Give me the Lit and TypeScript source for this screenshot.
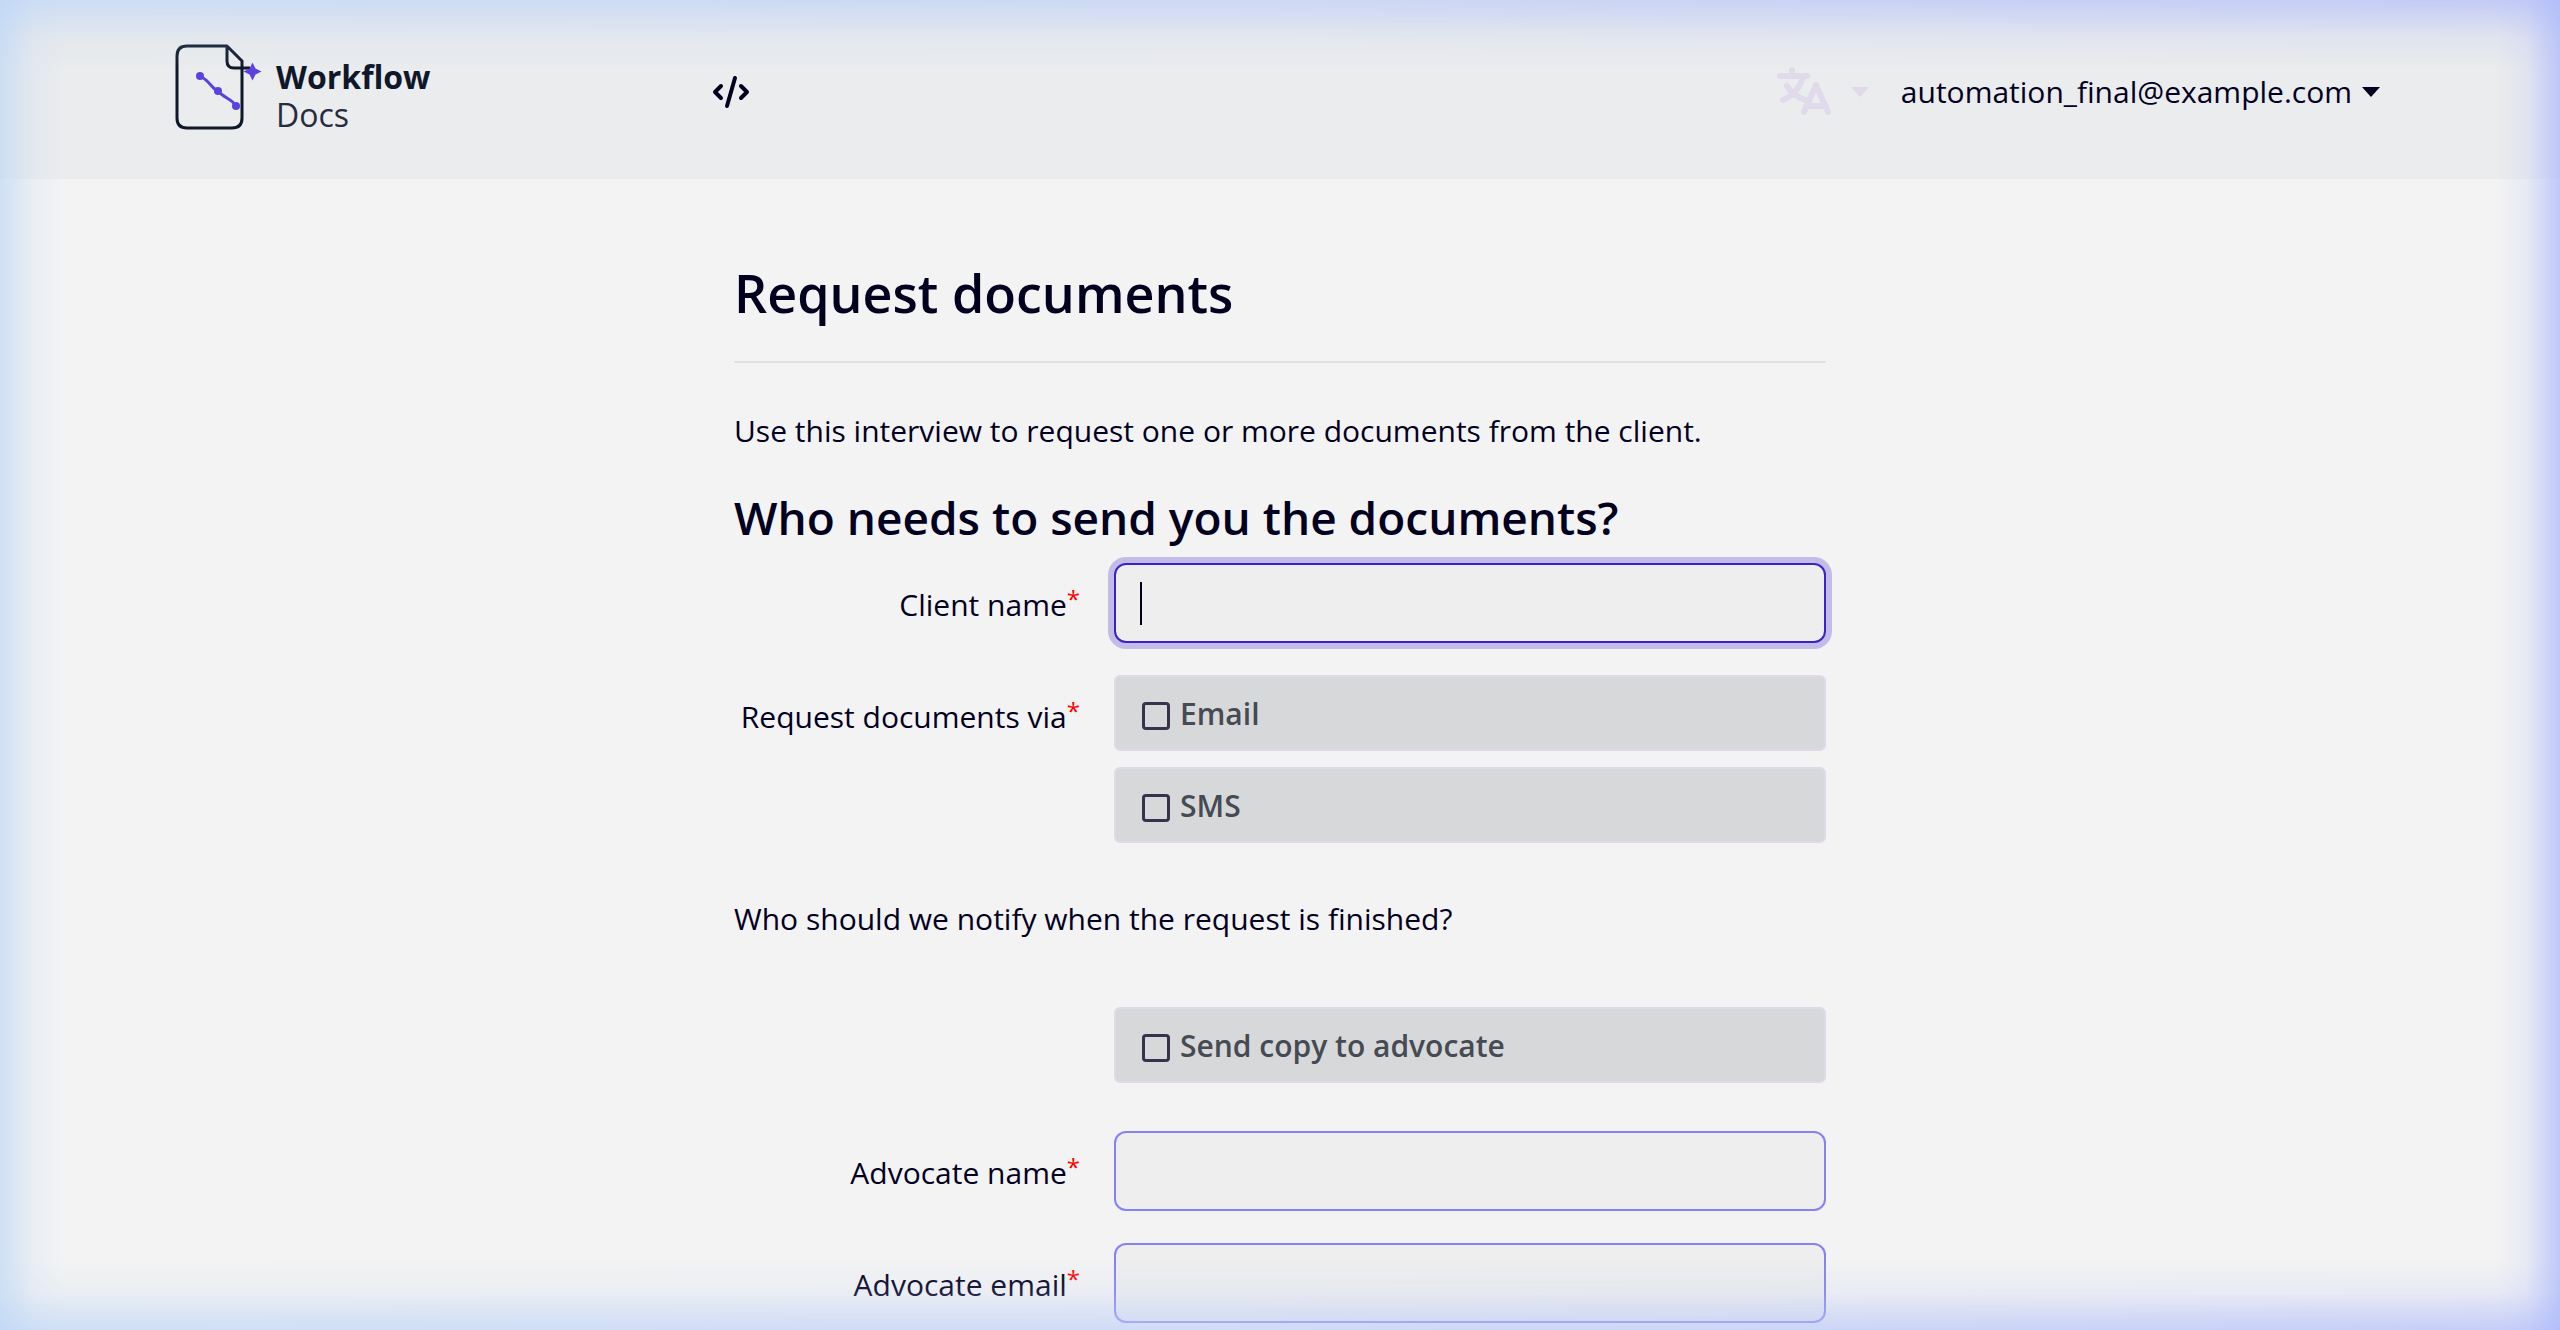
import { LitElement, html, css, svg } from "lit";
import { customElement, query } from "lit/decorators.js";

@customElement("app-root")
export class AppRoot extends LitElement {
  @query("#client-name") private clientName!: HTMLInputElement;

  static styles = css`
    :host {
      display: block;
      min-height: 100vh;
      box-sizing: border-box;
      background: #f3f3f3;
      color: #02001f;
      font: 400 30px/48px "Segoe UI", "Open Sans", "Noto Sans", sans-serif;
    }
    *, *::before, *::after { box-sizing: border-box; }
    .glow {
      position: fixed;
      inset: 0;
      z-index: 5;
      pointer-events: none;
      background: linear-gradient(to right, #bcd6f6, #bccdf8 50%, #adb9fb);
      mask-image:
        linear-gradient(to right, #000000a6, #0000006e 16px, #00000024 34px, #0000 64px),
        linear-gradient(to left, #000000bf, #00000078 16px, #00000026 34px, #0000 64px),
        linear-gradient(to bottom, #000000a6, #0000006e 18px, #00000026 38px, #0000 70px),
        linear-gradient(to top, #000000a6, #0000006e 18px, #00000026 38px, #0000 70px);
    }
    .bar {
      display: flex;
      align-items: center;
      height: 179px;
      padding: 4px 180px 0 174px;
      background: #ebeced;
    }
    .brand {
      display: flex;
      align-items: center;
      gap: 14px;
      color: #0f172a;
      text-decoration: none;
      font-size: 32px;
      line-height: 38px;
    }
    .brand-name { display: flex; flex-direction: column; padding-top: 8px; }
    .brand-name strong { font-weight: 700; }
    .brand-name span { color: #272c3e; }
    .mark { display: block; width: 88px; height: 96px; }
    .source { margin-left: 282px; display: flex; color: inherit; }
    .tools { margin-left: auto; display: flex; align-items: center; gap: 32px; }
    .tools button {
      display: flex;
      align-items: center;
      gap: 10px;
      padding: 0;
      border: 0;
      background: none;
      color: inherit;
      font: inherit;
    }
    .tools .language { gap: 20px; color: #e1daea; }
    main {
      max-width: 1092px;
      margin: 0 auto;
      padding: 80px 0 4px;
    }
    h1, h2, p { margin: 0; }
    h1 { font-size: 52px; line-height: 68px; font-weight: 600; }
    h2 { margin-bottom: 18px; font-size: 46px; line-height: 56px; font-weight: 600; }
    hr { margin: 34px 0 44px; border: 0; border-top: 2px solid #e1e1e1; }
    .intro { margin-bottom: 34px; }
    .question { margin: 52px 0 64px; }
    .row {
      display: grid;
      grid-template-columns: minmax(0, 346fr) minmax(0, 712fr);
      column-gap: 34px;
      margin-bottom: 32px;
    }
    .row.after { margin-bottom: 48px; }
    .row:last-child { margin-bottom: 0; }
    .label { padding-top: 18px; text-align: right; }
    .label sup { color: #f00; font-size: 24px; line-height: 0; vertical-align: 8px; }
    .field {
      display: block;
      width: 100%;
      height: 80px;
      padding: 0 24px;
      border: 2px solid #8583f3;
      border-radius: 12px;
      background: #eeeeee;
      color: inherit;
      font: inherit;
      outline: 0;
    }
    .field:focus {
      border-color: #3d20c9;
      box-shadow: 0 0 0 6px #c4bce8;
      caret-color: transparent;
    }
    .field:focus:placeholder-shown {
      background: linear-gradient(#02001f, #02001f) 24px center / 2px 43px no-repeat #eeeeee;
    }
    .choices { display: grid; row-gap: 16px; }
    .choice {
      display: flex;
      align-items: center;
      gap: 10px;
      height: 76px;
      padding: 2px 26px 0;
      border: 2px solid #dfd9e9;
      border-radius: 6px;
      background: #d7d8da;
      color: #454a53;
      font-weight: 600;
    }
    .choice input {
      appearance: none;
      width: 28px;
      height: 28px;
      margin: 4px 0 0;
      border: 3px solid #37334d;
      border-radius: 4px;
    }
    .choice input:checked { background: #37334d; }
  `;

  firstUpdated() {
    this.clientName.focus();
  }

  private caret() {
    return svg`<svg width="18" height="10" viewBox="0 0 18 10" fill="currentColor" aria-hidden="true"><path d="M0 0h18L9 10z"/></svg>`;
  }

  private choice(id: string, text: string) {
    return html`<label class="choice" for=${id}><input type="checkbox" id=${id} />${text}</label>`;
  }

  private textRow(id: string, text: string, type = "text") {
    return html`
      <div class="row">
        <label class="label" for=${id}>${text}<sup>*</sup></label>
        <input class="field" id=${id} type=${type} placeholder=" " required />
      </div>
    `;
  }

  render() {
    return html`
      <header class="bar">
        <a class="brand" href="#">
          <svg class="mark" viewBox="0 0 88 96" fill="none" aria-hidden="true">
            <path d="M53 2H13Q3 2 3 12V74Q3 84 13 84H58Q68 84 68 74V17L53 2V17Q53 24 60 24H76" stroke="#0f172a" stroke-width="3" stroke-linejoin="round"/>
            <path d="M26 32C36 37 38 45 44 47C50 54 58 55 62 62" stroke="#5b42e0" stroke-width="3"/>
            <g fill="#5b42e0"><circle cx="26" cy="32" r="4"/><circle cx="44" cy="47" r="4"/><circle cx="62" cy="62" r="4"/>
            <path d="M78.500 18.500L81.500 24.500L87.500 27.500L81.500 30.500L78.500 36.500L75.500 30.500L69.500 27.500L75.500 24.500Z"/></g>
          </svg>
          <span class="brand-name"><strong>Workflow</strong><span>Docs</span></span>
        </a>
        <a class="source" href="#source" aria-label="Source">
          <svg width="38" height="34" viewBox="0 0 38 34" fill="none" stroke="currentColor" stroke-width="4" stroke-linecap="round" stroke-linejoin="round">
            <path d="M9 11L3 17L9 23M29 11L35 17L29 23M23 3L15 31"/>
          </svg>
        </a>
        <div class="tools">
          <button class="language" type="button" aria-label="Language">
            <svg width="54" height="50" viewBox="0 0 54 50" fill="none" stroke="currentColor" stroke-width="6" stroke-linecap="round" stroke-linejoin="round">
              <path d="M15 3V9M3 9H30M26 10Q21 27 6 33M10 19Q15 28 28 33M27 45L39 18L51 45M31 39H47"/>
            </svg>
            ${this.caret()}
          </button>
          <button type="button">automation_final@example.com ${this.caret()}</button>
        </div>
      </header>
      <main>
        <h1>Request documents</h1>
        <hr />
        <p class="intro">Use this interview to request one or more documents from the client.</p>
        <h2>Who needs to send you the documents?</h2>
        <form>
          ${this.textRow("client-name", "Client name")}
          <div class="row" role="group" aria-labelledby="via">
            <div class="label" id="via">Request documents via<sup>*</sup></div>
            <div class="choices">${this.choice("email", "Email")}${this.choice("sms", "SMS")}</div>
          </div>
          <p class="question">Who should we notify when the request is finished?</p>
          <div class="row after">
            <span></span>
            ${this.choice("copy", "Send copy to advocate")}
          </div>
          ${this.textRow("advocate-name", "Advocate name")}
          ${this.textRow("advocate-email", "Advocate email", "email")}
        </form>
      </main>
      <div class="glow"></div>
    `;
  }
}
